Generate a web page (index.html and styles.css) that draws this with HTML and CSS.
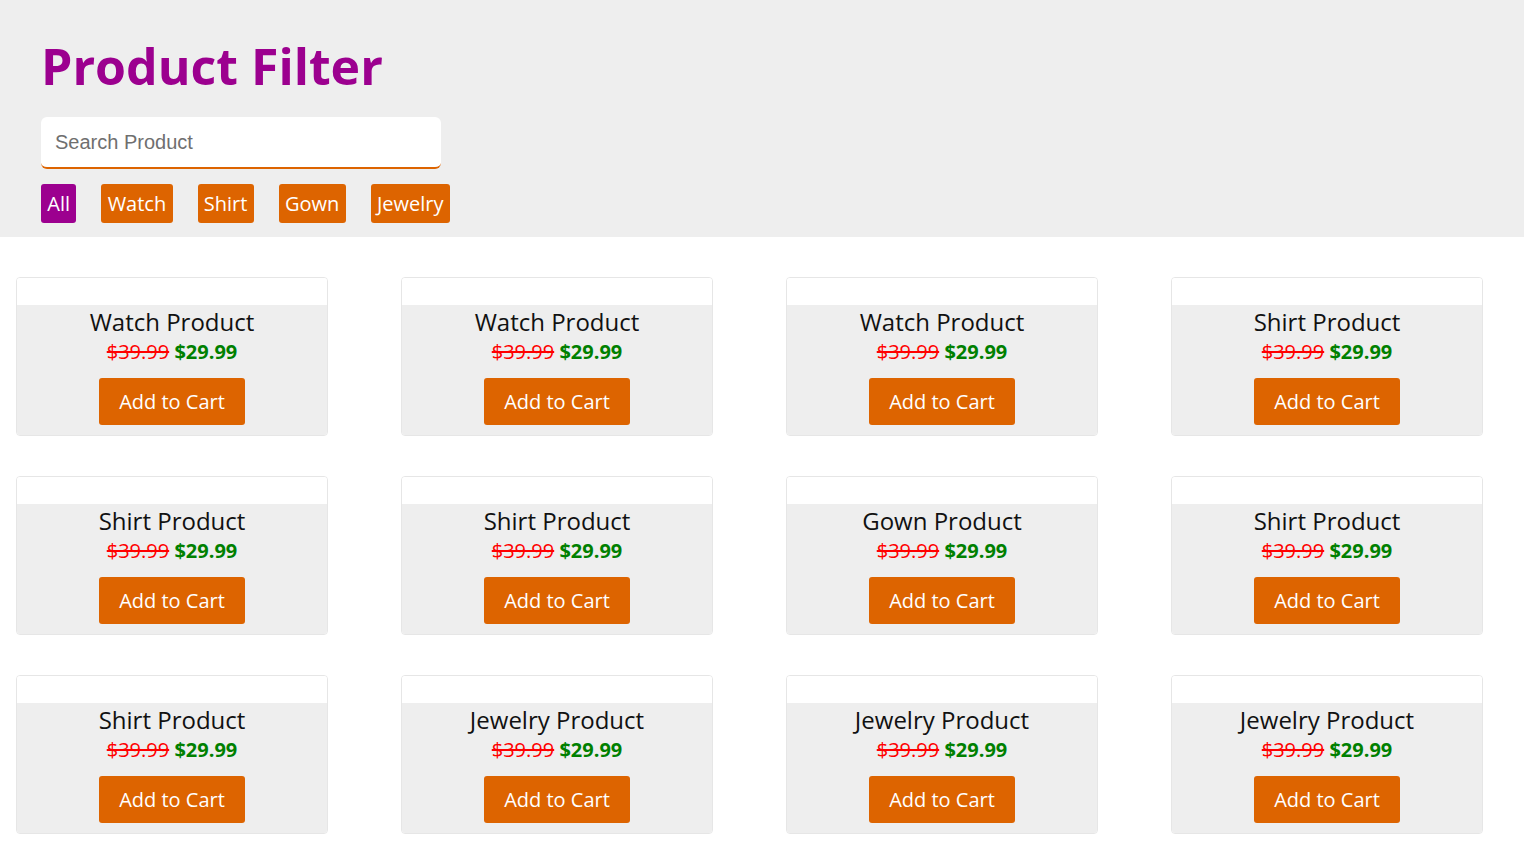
FILE: index.html
```html
<!DOCTYPE html>
<html>
<head>
<meta charset="utf-8">
<link rel="stylesheet" href="styles.css">
</head>
<body>
<header class="top">
  <h1 class="title">Product Filter</h1>
  <input class="search" type="text" placeholder="Search Product">
  <div class="filters">
    <button class="chip active">All</button>
    <button class="chip">Watch</button>
    <button class="chip">Shirt</button>
    <button class="chip">Gown</button>
    <button class="chip">Jewelry</button>
  </div>
</header>
<main class="grid">
  <div class="card"><div class="img"></div><div class="info"><div class="name">Watch Product</div><div class="price"><s class="old">$39.99</s> <b class="new">$29.99</b></div><button class="cart">Add to Cart</button></div></div>
  <div class="card"><div class="img"></div><div class="info"><div class="name">Watch Product</div><div class="price"><s class="old">$39.99</s> <b class="new">$29.99</b></div><button class="cart">Add to Cart</button></div></div>
  <div class="card"><div class="img"></div><div class="info"><div class="name">Watch Product</div><div class="price"><s class="old">$39.99</s> <b class="new">$29.99</b></div><button class="cart">Add to Cart</button></div></div>
  <div class="card"><div class="img"></div><div class="info"><div class="name">Shirt Product</div><div class="price"><s class="old">$39.99</s> <b class="new">$29.99</b></div><button class="cart">Add to Cart</button></div></div>
  <div class="card"><div class="img"></div><div class="info"><div class="name">Shirt Product</div><div class="price"><s class="old">$39.99</s> <b class="new">$29.99</b></div><button class="cart">Add to Cart</button></div></div>
  <div class="card"><div class="img"></div><div class="info"><div class="name">Shirt Product</div><div class="price"><s class="old">$39.99</s> <b class="new">$29.99</b></div><button class="cart">Add to Cart</button></div></div>
  <div class="card"><div class="img"></div><div class="info"><div class="name">Gown Product</div><div class="price"><s class="old">$39.99</s> <b class="new">$29.99</b></div><button class="cart">Add to Cart</button></div></div>
  <div class="card"><div class="img"></div><div class="info"><div class="name">Shirt Product</div><div class="price"><s class="old">$39.99</s> <b class="new">$29.99</b></div><button class="cart">Add to Cart</button></div></div>
  <div class="card"><div class="img"></div><div class="info"><div class="name">Shirt Product</div><div class="price"><s class="old">$39.99</s> <b class="new">$29.99</b></div><button class="cart">Add to Cart</button></div></div>
  <div class="card"><div class="img"></div><div class="info"><div class="name">Jewelry Product</div><div class="price"><s class="old">$39.99</s> <b class="new">$29.99</b></div><button class="cart">Add to Cart</button></div></div>
  <div class="card"><div class="img"></div><div class="info"><div class="name">Jewelry Product</div><div class="price"><s class="old">$39.99</s> <b class="new">$29.99</b></div><button class="cart">Add to Cart</button></div></div>
  <div class="card"><div class="img"></div><div class="info"><div class="name">Jewelry Product</div><div class="price"><s class="old">$39.99</s> <b class="new">$29.99</b></div><button class="cart">Add to Cart</button></div></div>
</main>
</body>
</html>
```
FILE: styles.css
```css
* { box-sizing: border-box; }
body {
  margin: 0;
  font-family: "Open Sans", sans-serif;
  background: #fff;
  color: #111;
}
.top {
  background: #eeeeee;
  padding: 29px 41px 14px;
}
.title {
  margin: 0;
  font-size: 50px;
  font-weight: 700;
  line-height: 75px;
  color: #9c008f;
}
.search {
  display: block;
  margin-top: 13px;
  width: 400px;
  height: 52px;
  border: none;
  border-bottom: 2px solid #dd6400;
  border-radius: 6px;
  padding: 0 14px;
  font-family: "Liberation Sans", Arial, sans-serif;
  font-size: 20px;
  color: #333;
  background: #fff;
  outline: none;
}
.search::placeholder { color: #6f6f6f; }
.filters {
  display: flex;
  gap: 25px;
  margin-top: 15px;
}
.chip {
  font-family: "Open Sans", sans-serif;
  font-size: 20px;
  line-height: 27px;
  height: 39px;
  padding: 6px 6.3px;
  border: none;
  border-radius: 3px;
  background: #dd6400;
  color: #fff;
  cursor: pointer;
}
.chip.active { background: #9c008f; }
.grid {
  display: grid;
  grid-template-columns: repeat(4, 312px);
  column-gap: 73px;
  row-gap: 40px;
  padding: 40px 16px;
}
.card {
  border: 1px solid #e6e6e6;
  border-radius: 4px;
  overflow: hidden;
  background: #fff;
}
.img { height: 27px; background: #fff; }
.info {
  background: #eeeeee;
  text-align: center;
  padding-bottom: 10px;
}
.name {
  font-size: 24px;
  line-height: 33px;
  color: #111;
}
.price {
  font-size: 20px;
  line-height: 28px;
}
.old { color: #ff0000; }
.new { color: #008000; font-weight: 700; }
.cart {
  margin-top: 12px;
  font-family: "Open Sans", sans-serif;
  font-size: 20px;
  line-height: 27px;
  padding: 10px 20px;
  border: none;
  border-radius: 3px;
  background: #dd6400;
  color: #fff;
  cursor: pointer;
}
```
